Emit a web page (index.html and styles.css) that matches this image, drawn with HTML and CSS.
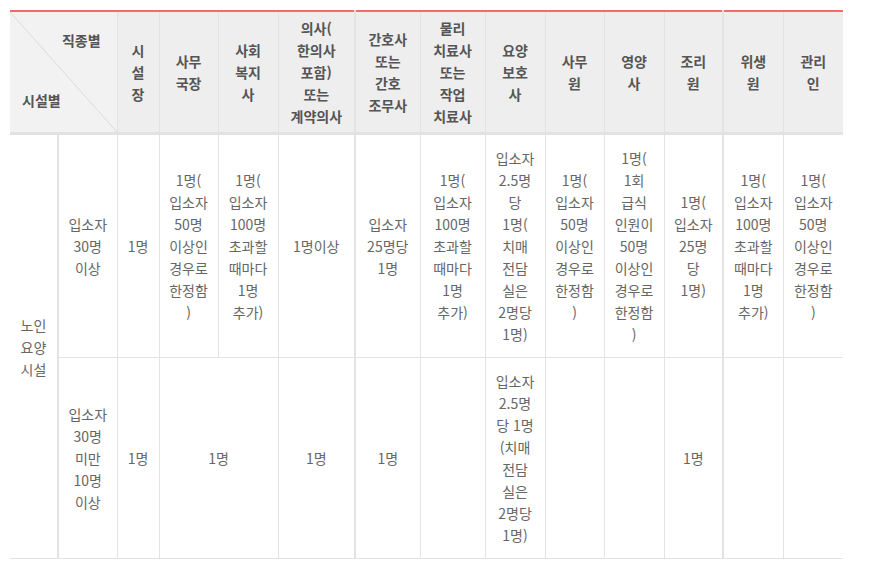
FILE: index.html
```html
<!DOCTYPE html>
<html lang="ko">
<head>
<meta charset="utf-8">
<title>직종별 시설별 인력 기준</title>
<link rel="stylesheet" href="styles.css">
</head>
<body>
<table class="staff">
  <colgroup>
    <col class="w48"><col class="w59"><col class="w42"><col class="w59"><col class="w60"><col class="w77"><col class="w65">
    <col class="w65"><col class="w60"><col class="w59"><col class="w60"><col class="w59"><col class="w60"><col class="w60">
  </colgroup>
  <thead>
    <tr>
      <th colspan="2" class="diag">
        <div class="diag-box">
          <span class="diag-top">직종별</span>
          <span class="diag-bottom">시설별</span>
        </div>
      </th>
      <th>시<br>설<br>장</th>
      <th>사무<br>국장</th>
      <th>사회<br>복지<br>사</th>
      <th>의사(<br>한의사<br>포함)<br>또는<br>계약의사</th>
      <th class="thick">간호사<br>또는<br>간호<br>조무사</th>
      <th>물리<br>치료사<br>또는<br>작업<br>치료사</th>
      <th>요양<br>보호<br>사</th>
      <th>사무<br>원</th>
      <th>영양<br>사</th>
      <th>조리<br>원</th>
      <th class="thick">위생<br>원</th>
      <th>관리<br>인</th>
    </tr>
  </thead>
  <tbody>
    <tr class="r1">
      <td rowspan="2" class="facility">노인<br>요양<br>시설</td>
      <td class="thick">입소자<br>30명<br>이상</td>
      <td>1명</td>
      <td>1명(<br>입소자<br>50명<br>이상인<br>경우로<br>한정함<br>)</td>
      <td>1명(<br>입소자<br>100명<br>초과할<br>때마다<br>1명<br>추가)</td>
      <td>1명이상</td>
      <td class="thick">입소자<br>25명당<br>1명</td>
      <td>1명(<br>입소자<br>100명<br>초과할<br>때마다<br>1명<br>추가)</td>
      <td>입소자<br>2.5명<br>당<br>1명(<br>치매<br>전담<br>실은<br>2명당<br>1명)</td>
      <td>1명(<br>입소자<br>50명<br>이상인<br>경우로<br>한정함<br>)</td>
      <td>1명(<br>1회<br>급식<br>인원이<br>50명<br>이상인<br>경우로<br>한정함<br>)</td>
      <td>1명(<br>입소자<br>25명<br>당<br>1명)</td>
      <td class="thick">1명(<br>입소자<br>100명<br>초과할<br>때마다<br>1명<br>추가)</td>
      <td>1명(<br>입소자<br>50명<br>이상인<br>경우로<br>한정함<br>)</td>
    </tr>
    <tr class="r2">
      <td class="thick">입소자<br>30명<br>미만<br>10명<br>이상</td>
      <td>1명</td>
      <td colspan="2">1명</td>
      <td>1명</td>
      <td class="thick">1명</td>
      <td></td>
      <td>입소자<br>2.5명<br>당 1명<br>(치매<br>전담<br>실은<br>2명당<br>1명)</td>
      <td></td>
      <td></td>
      <td>1명</td>
      <td class="thick"></td>
      <td></td>
    </tr>
  </tbody>
</table>
</body>
</html>
```

FILE: styles.css
```css
html, body {
  margin: 0;
  padding: 0;
  background: #ffffff;
}

body {
  font-family: "Noto Sans CJK KR", "Noto Sans", sans-serif;
  font-size: 14px;
  color: #666666;
}

.staff {
  margin: 10px 0 0 10px;
  width: 833px;
  table-layout: fixed;
  border-collapse: collapse;
  border-top: 2px solid #f26b6b;
}

.w42 { width: 42px; }
.w48 { width: 48px; }
.w59 { width: 59px; }
.w60 { width: 60px; }
.w65 { width: 65px; }
.w77 { width: 77px; }

.staff th,
.staff td {
  padding: 0 4px;
  text-align: center;
  vertical-align: middle;
  line-height: 22px;
  border: 1px solid #e3e3e3;
  letter-spacing: 0;
}

.staff th:first-child,
.staff td.facility {
  border-left: none;
}

.staff th:last-child,
.staff td:last-child {
  border-right: none;
}

.staff thead th {
  height: 120px;
  background: #eeeeee;
  color: #555555;
  font-weight: bold;
  border-top: none;
  border-bottom: 3px solid #e2e2e2;
}

.staff thead th.diag {
  padding: 0;
  background-color: #f2f2f2;
  background-image: linear-gradient(to top right, transparent calc(50% - 0.7px), #d9d9d9 50%, transparent calc(50% + 0.7px));
}

.diag-box {
  height: 120px;
  display: flex;
  flex-direction: column;
  justify-content: space-between;
  padding: 17px 16px 21px 12px;
  box-sizing: border-box;
}

.diag-top {
  align-self: flex-end;
  line-height: 22px;
}

.diag-bottom {
  align-self: flex-start;
  line-height: 22px;
}

.staff .thick {
  border-left: 2px solid #e3e3e3;
}

.staff tbody td {
  font-weight: normal;
}

.staff tr.r1 td {
  height: 195px;
  padding-top: 12px;
  padding-bottom: 12px;
}

.staff tr.r2 td {
  height: 172px;
  padding-top: 12px;
  padding-bottom: 12px;
}

.staff td.facility {
  padding: 0 2px;
}
```
